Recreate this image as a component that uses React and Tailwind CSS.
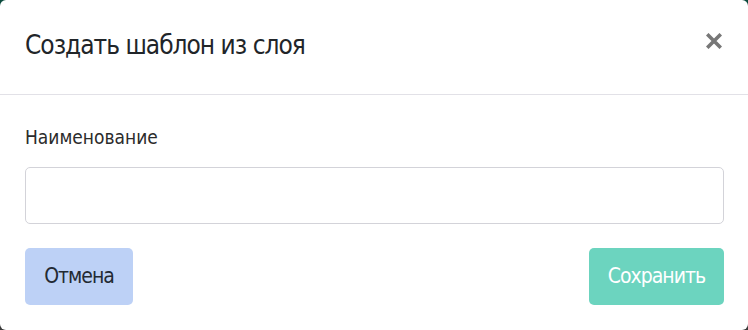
import React from "react";

const font = { fontFamily: '"DejaVu Sans Condensed", Roboto, sans-serif' };

export default function App() {
  return (
    <div className="w-[748px] h-[330px] bg-gradient-to-b from-[#0b4a3d] to-[#3a3a3a]" style={font}>
      <div className="w-full h-full bg-white rounded-[6px] flex flex-col">
        <div className="h-[95px] border-b border-[#e2e1e7] flex items-start justify-between pl-[25px] pr-[26px]">
          <h1 className="mt-[29px] text-[26px] leading-[32px] tracking-[-1px] text-[#212529] font-normal">Создать шаблон из слоя</h1>
          <button className="mt-[33px] w-[16px] h-[16px] flex items-center justify-center" aria-label="Закрыть">
            <svg width="16" height="16" viewBox="0 0 16 16">
              <path d="M2.5 2.5 L13.5 13.5 M13.5 2.5 L2.5 13.5" stroke="#777777" strokeWidth="3.6" strokeLinecap="square" fill="none" />
            </svg>
          </button>
        </div>
        <div className="flex flex-col pl-[25px] pr-[24px] pt-[30px]">
          <label className="text-[19px] leading-[24px] text-[#2b2b2b]">Наименование</label>
          <input className="mt-[18px] h-[57px] w-full rounded-[5px] border border-[#d3d3d9] outline-none px-3 text-[18px]" />
          <div className="mt-[24px] flex justify-between">
            <button className="h-[57px] w-[108px] rounded-[5px] bg-[#bdd1f6] text-[21px] tracking-[-1px] text-[#232a33]">Отмена</button>
            <button className="h-[57px] w-[135px] rounded-[5px] bg-[#6cd4bf] text-[21px] tracking-[-1px] text-white">Сохранить</button>
          </div>
        </div>
      </div>
    </div>
  );
}
